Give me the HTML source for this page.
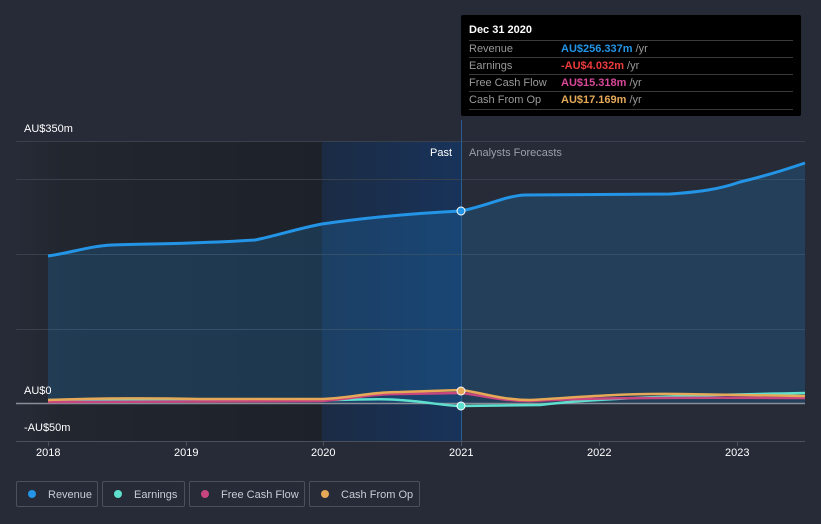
<!DOCTYPE html>
<html><head><style>
body{margin:0;width:821px;height:524px;background:#262b37;font-family:"Liberation Sans",sans-serif;overflow:hidden;position:relative}
.t{position:absolute;font-size:11px;color:#fff}
.tip{position:absolute;left:461px;top:15px;width:340px;height:101px;background:#000;border-radius:2px}
.tip .r{position:absolute;left:8px;width:324px;border-top:1px solid #3a3a3a;height:17px;font-size:11px;color:#999;line-height:17px}
.tip .r span{position:absolute;left:92px;font-weight:bold}
.lg{position:absolute;top:481px;height:26px;border:1px solid #4a505c;border-radius:2px;font-size:11px;color:#c8ccd4;line-height:26px;box-sizing:border-box;white-space:nowrap}
.lg i{display:inline-block;width:8px;height:8px;border-radius:50%;margin:0 12px 0 11px;vertical-align:0px}
</style></head><body>
<svg width="821" height="524" style="position:absolute;left:0;top:0">
<defs><linearGradient id="dk" x1="0" x2="1"><stop offset="0" stop-color="#262b37"/><stop offset="0.15" stop-color="#22262f"/><stop offset="1" stop-color="#1d2129"/></linearGradient>
<linearGradient id="bl" x1="0" x2="1"><stop offset="0" stop-color="#1b2b44"/><stop offset="1" stop-color="#18335a"/></linearGradient></defs>
<rect x="16" y="141" width="306" height="300" fill="url(#dk)"/>
<rect x="322" y="141" width="139" height="300" fill="url(#bl)"/>
<g stroke="#39404d" stroke-width="1"><line x1="16" y1="141.5" x2="805" y2="141.5"/><line x1="16" y1="179.5" x2="805" y2="179.5"/><line x1="16" y1="254.5" x2="805" y2="254.5"/><line x1="16" y1="329.5" x2="805" y2="329.5"/></g>
<path d="M48,256 C70,253 90,246 112,245 C140,244 170,244 190,243 C220,242 240,241 255,240 C275,236 300,228 322,224 C350,220 400,214 461,211 C490,205 505,196 525,195 L670,194 C700,192 720,189 740,182 C770,175 790,168 805,163 L805,403 L48,403 Z" fill="#1f89d8" fill-opacity="0.22"/>
<path d="M48,256 C70,253 90,246 112,245 C140,244 170,244 190,243 C220,242 240,241 255,240 C275,236 300,228 322,224 C350,220 400,214 461,211 C490,205 505,196 525,195 L670,194 C700,192 720,189 740,182 C770,175 790,168 805,163" fill="none" stroke="#2394e6" stroke-width="3"/>
<line x1="16" y1="403.5" x2="805" y2="403.5" stroke="#888e98" stroke-width="1.5"/>
<path d="M48,400 L150,400 L322,400 C360,400 380,398 400,400 C430,402 445,406 461,406 L540,405 C580,400 650,396 805,393" fill="none" stroke="#5fe0cf" stroke-width="2.5"/>
<path d="M48,402 L322,401 C350,399 370,394 400,394 L461,393 C480,395 500,401 530,401 C570,399 620,397 805,398" fill="none" stroke="#c8467e" stroke-width="2.5"/>
<path d="M48,400 C100,398 150,398 200,399 L322,399 C350,398 370,392 400,392 L461,390 C480,392 500,400 530,400 C570,398 620,393 680,394 L805,396" fill="none" stroke="#e5a958" stroke-width="2.5"/>
<line x1="461.5" y1="120" x2="461.5" y2="441" stroke="#2a5b93" stroke-width="1"/>
<line x1="16" y1="441.5" x2="805" y2="441.5" stroke="#4a505c"/>
<g stroke="#4a505c"><line x1="48.5" y1="441" x2="48.5" y2="446"/><line x1="186.5" y1="441" x2="186.5" y2="446"/><line x1="323.5" y1="441" x2="323.5" y2="446"/><line x1="461.5" y1="441" x2="461.5" y2="446"/><line x1="599.5" y1="441" x2="599.5" y2="446"/><line x1="737.5" y1="441" x2="737.5" y2="446"/></g>
<circle cx="461" cy="211" r="4" fill="#2394e6" stroke="#fff" stroke-width="1"/>
<circle cx="461" cy="406" r="4" fill="#5fe0cf" stroke="#fff" stroke-width="1"/>
<circle cx="461" cy="391" r="4" fill="#e5a958" stroke="#fff" stroke-width="1"/>
</svg>
<div class="t" style="left:24px;top:123px">AU$350m</div>
<div class="t" style="left:24px;top:385px">AU$0</div>
<div class="t" style="left:24px;top:422px">-AU$50m</div>
<div class="t" style="left:430px;top:147px">Past</div>
<div class="t" style="left:469px;top:147px;color:#9aa0aa">Analysts Forecasts</div>
<div class="t" style="left:36px;top:447px">2018</div>
<div class="t" style="left:174px;top:447px">2019</div>
<div class="t" style="left:311px;top:447px">2020</div>
<div class="t" style="left:449px;top:447px">2021</div>
<div class="t" style="left:587px;top:447px">2022</div>
<div class="t" style="left:725px;top:447px">2023</div>
<div class="tip">
<div style="position:absolute;left:8px;top:9px;color:#fff;font-weight:bold;font-size:11px">Dec 31 2020</div>
<div class="r" style="top:25px">Revenue<span style="color:#2394e6">AU$256.337m <b style="color:#999;font-weight:normal">/yr</b></span></div>
<div class="r" style="top:42px">Earnings<span style="color:#ee3b3b">-AU$4.032m <b style="color:#999;font-weight:normal">/yr</b></span></div>
<div class="r" style="top:59px">Free Cash Flow<span style="color:#d9489a">AU$15.318m <b style="color:#999;font-weight:normal">/yr</b></span></div>
<div class="r" style="top:76px;border-bottom:1px solid #3a3a3a">Cash From Op<span style="color:#e5a958">AU$17.169m <b style="color:#999;font-weight:normal">/yr</b></span></div>
</div>
<div class="lg" style="left:16px;width:82px"><i style="background:#2394e6"></i>Revenue</div>
<div class="lg" style="left:102px;width:83px"><i style="background:#5fe0cf"></i>Earnings</div>
<div class="lg" style="left:189px;width:116px"><i style="background:#c8467e"></i>Free Cash Flow</div>
<div class="lg" style="left:309px;width:111px"><i style="background:#e5a958"></i>Cash From Op</div>
</body></html>
